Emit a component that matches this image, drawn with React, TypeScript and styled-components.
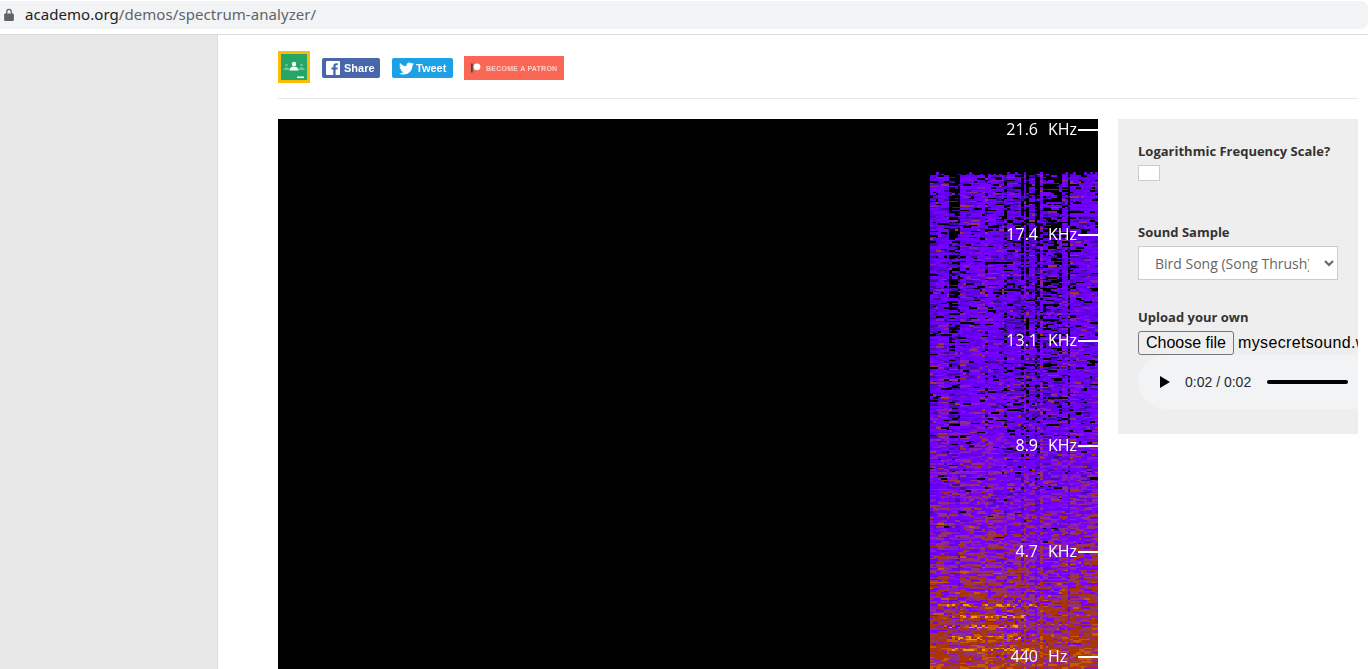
import { useEffect, useRef } from 'react';
import styled, { createGlobalStyle } from 'styled-components';
import { FaTwitter } from 'react-icons/fa';

const GlobalStyle = createGlobalStyle`
  html, body {
    margin: 0;
    height: 669px;
    overflow: hidden;
    background: #fff;
    font-family: 'Open Sans', 'Liberation Sans', sans-serif;
  }
`;

const Page = styled.div`
  display: flex;
  flex-direction: column;
  width: 1368px;
  height: 669px;
  overflow: hidden;
`;

const BrowserBar = styled.div`
  height: 35px;
  box-sizing: border-box;
  padding-top: 1px;
  border-bottom: 1px solid #dadce0;
  flex-shrink: 0;
`;

const UrlBox = styled.div`
  height: 28px;
  background: #f1f3f4;
  border-radius: 0 8px 8px 0;
  display: flex;
  align-items: center;
  padding: 0 0 2px 4px;
  box-sizing: border-box;
  gap: 11px;
  font-family: 'Noto Sans', sans-serif;
  font-size: 15px;
  letter-spacing: 0.06px;
  color: #5f6368;
`;

const UrlHost = styled.span`
  color: #202124;
`;

const Body = styled.div`
  flex: 1;
  display: flex;
  min-height: 0;
`;

const Sidebar = styled.aside`
  width: 217px;
  flex-shrink: 0;
  background: #e8e8e8;
  border-right: 1px solid #ddd;
`;

const Content = styled.main`
  flex: 1;
  padding: 0 10px 0 60px;
  min-width: 0;
`;

const SocialRow = styled.div`
  height: 64px;
  box-sizing: border-box;
  padding-top: 16px;
  border-bottom: 1px solid #e8e8e8;
  display: flex;
  align-items: flex-start;
`;

const ClassroomIcon = styled.svg`
  width: 32px;
  height: 32px;
  margin-right: 12px;
  flex-shrink: 0;
`;

const ShareButton = styled.div<{ $bg: string; $w: number }>`
  width: ${p => p.$w}px;
  height: 20px;
  margin: 7px 12px 0 0;
  background: ${p => p.$bg};
  border-radius: 2px;
  display: flex;
  align-items: center;
  color: #fff;
  font-family: 'Liberation Sans', sans-serif;
  font-weight: 700;
  font-size: 11px;
  filter: blur(0.3px);
`;

const FbGlyph = styled.svg`
  width: 14px;
  height: 14px;
  margin: 0 4px 0 4px;
`;

const TwitterGlyph = styled(FaTwitter)`
  width: 15px;
  height: 15px;
  margin: 0 2px 0 7px;
`;

const PatronButton = styled.div`
  width: 100px;
  height: 24px;
  margin: 5px 0 0 -1px;
  background: #f96854;
  display: flex;
  align-items: center;
  padding-left: 7px;
  box-sizing: border-box;
  gap: 5px;
  color: #fdd0c8;
  font-family: 'Liberation Sans', sans-serif;
  font-weight: 700;
  font-size: 7px;
  letter-spacing: 0.25px;
  white-space: nowrap;
`;

const PatronText = styled.span`
  filter: blur(0.4px);
`;

const PatronGlyph = styled.svg`
  width: 10px;
  height: 10px;
  flex-shrink: 0;
`;

const Columns = styled.div`
  display: flex;
  gap: 20px;
  padding-top: 20px;
`;

const SpectrumBox = styled.div`
  position: relative;
  width: 820px;
  height: 550px;
  background: #000;
  flex-shrink: 0;
  overflow: hidden;
`;

const SpectrumCanvas = styled.canvas`
  display: block;
`;

const Axis = styled.div`
  position: absolute;
  top: -1px;
  right: 0;
  display: flex;
  flex-direction: column;
  gap: 83.4px;
`;

const AxisRow = styled.div`
  height: 22px;
  display: flex;
  align-items: center;
  color: #fff;
  font-size: 16px;
`;

const AxisValue = styled.span`
  width: 50px;
  text-align: right;
  margin-right: 10px;
`;

const AxisUnit = styled.span`
  width: 30px;
`;

const AxisTick = styled.span`
  width: 20px;
  height: 2px;
  margin-top: 2px;
  background: #fff;
`;

const Panel = styled.section`
  width: 240px;
  height: 315px;
  box-sizing: border-box;
  padding: 23px 0 0 20px;
  background: #eee;
  overflow: hidden;
  flex-shrink: 0;
`;

const Label = styled.div<{ $mt?: number }>`
  margin-top: ${p => p.$mt ?? 0}px;
  font-size: 13px;
  line-height: 18px;
  font-weight: 700;
  color: #333;
  white-space: nowrap;
`;

const FakeCheck = styled.div`
  width: 22px;
  height: 16px;
  margin-top: 5px;
  box-sizing: border-box;
  background: #fff;
  border: 1px solid #ccc;
`;

const SampleSelect = styled.select`
  display: block;
  width: 200px;
  height: 34px;
  margin-top: 5px;
  padding: 0 12px;
  box-sizing: border-box;
  background: #fff;
  border: 1px solid #ccc;
  border-radius: 0;
  color: #666;
  font-family: 'Open Sans', sans-serif;
  font-size: 14px;
`;

const FileRow = styled.div`
  display: flex;
  align-items: center;
  height: 24px;
  margin-top: 5px;
  white-space: nowrap;
  font-family: 'Liberation Sans', sans-serif;
  font-size: 16px;
  color: #000;
`;

const FileButton = styled.button`
  width: 96px;
  height: 24px;
  padding: 0;
  margin-right: 4px;
  flex-shrink: 0;
  background: #efefef;
  border: 1px solid #767676;
  border-radius: 3px;
  font: inherit;
  color: #000;
`;

const FileName = styled.span`
  letter-spacing: 0.35px;
`;

const Player = styled.div`
  width: 300px;
  height: 54px;
  display: flex;
  align-items: center;
  background: #f1f3f4;
  border-radius: 27px;
  font-family: 'Liberation Sans', sans-serif;
  font-size: 14px;
  color: #1f2a33;
`;

const PlayGlyph = styled.svg`
  width: 10px;
  height: 12px;
  margin: 0 15px 0 22px;
  flex-shrink: 0;
`;

const Progress = styled.div`
  width: 81px;
  height: 4px;
  margin-left: 16px;
  background: #000;
  border-radius: 2px;
  flex-shrink: 0;
`;

const LABELS = [
  ['21.6', 'KHz'],
  ['17.4', 'KHz'],
  ['13.1', 'KHz'],
  ['8.9', 'KHz'],
  ['4.7', 'KHz'],
  ['440', 'Hz'],
];

// x ranges (px from spectrogram's left edge) where the top of the spectrum is quiet
const QUIET: [number, number, number][] = [
  [18, 29, 0.7],
  [53, 56, 0.3],
  [72, 75, 0.45],
  [90, 93, 0.95],
  [96, 99, 0.8],
  [102, 105, 0.85],
  [107, 110, 0.7],
  [112, 132, 0.5],
  [135, 138, 0.95],
];

// rows with strong orange partials: y from top of canvas, x range
const PARTIALS: [number, number, number][] = [
  [486, 8, 105],
  [496, 30, 95],
  [507, 10, 90],
  [518, 12, 90],
  [529, 8, 105],
];

const colorFor = (v: number) => {
  if (v < 0.13) return '#000000';
  if (v < 0.25) return '#3d0c9e';
  if (v < 0.36) return '#5f00e6';
  if (v < 0.5) return '#7400ff';
  if (v < 0.58) return '#8a18c0';
  if (v < 0.66) return '#92307c';
  if (v < 0.74) return '#a03a30';
  if (v < 0.88) return '#ac3400';
  if (v < 0.97) return '#c85a00';
  return '#eda000';
};

const drawSpectrum = (ctx: CanvasRenderingContext2D) => {
  let seed = 12345;
  const rand = () => {
    seed = (seed * 1664525 + 1013904223) >>> 0;
    return seed / 4294967296;
  };
  const left = 652;
  const top = 53;
  const cols = 61;
  const cw = 168 / cols;
  const rowH = 1.5;
  const rows = Math.ceil(497 / rowH);
  ctx.fillStyle = '#000';
  ctx.fillRect(0, 0, 820, 550);
  const colGain: number[] = [];
  for (let c = 0; c < cols; c++) colGain.push(rand() * 0.1 - 0.05);
  const edge = colGain.map(() => Math.floor(rand() * 3));

  for (let r = 0; r < rows; r++) {
    const y = top + r * rowH;
    const f = r / rows;
    const rowGain = (rand() - 0.5) * 0.06;
    let run = 0;
    let runVal = 0;
    let lastQuiet = 0;
    for (let c = 0; c < cols; c++) {
      const px = c * cw;
      if (r < edge[c]) continue;
      let quiet = 0;
      for (const [a, b, q] of QUIET) if (px >= a && px < b) quiet = q;
      if (quiet !== lastQuiet) run = 0;
      lastQuiet = quiet;
      const base = 0.36 + Math.pow(f, 3.5) * 0.42 + colGain[c] + rowGain - quiet * 0.14 * f;
      if (run <= 0) {
        run = 1 + Math.floor(rand() * 3);
        let v = base + (rand() - 0.5) * (0.22 + f * 0.2);
        if (rand() < 0.05 + f * 0.12) v += 0.2;
        // black dropouts thin out toward the low frequencies
        const dropChance = Math.max(0, 0.16 * (1 - f * 1.3)) + quiet * Math.max(0, 1 - f * 1.6);
        if (rand() < dropChance) v = 0.05 + rand() * 0.1;
        runVal = Math.min(v, 0.92);
      }
      run--;
      let v = runVal;
      for (const [py, a, b] of PARTIALS) {
        if (Math.abs(y - py) < 2 && px >= a && px < b && rand() < 0.55) v = 0.9 + rand() * 0.14;
      }
      ctx.fillStyle = colorFor(v);
      ctx.fillRect(left + Math.round(px), Math.round(y), Math.ceil(cw), 2);
    }
  }
};

const Spectrum = () => {
  const ref = useRef<HTMLCanvasElement>(null);
  useEffect(() => {
    const ctx = ref.current?.getContext('2d');
    if (ctx) drawSpectrum(ctx);
  }, []);
  return <SpectrumCanvas ref={ref} width={820} height={550} />;
};

export default function App() {
  return (
    <Page>
      <GlobalStyle />
      <BrowserBar>
        <UrlBox>
          <svg width="10" height="13" viewBox="0 0 9 12">
            <path d="M1.8 5V3.400a2.700 2.700 0 0 1 5.400 0V5H8a1 1 0 0 1 1 1v5a1 1 0 0 1-1 1H1a1 1 0 0 1-1-1V6a1 1 0 0 1 1-1zM3 5h3V3.400a1.500 1.500 0 0 0-3 0z" fill="#5f6368" />
          </svg>
          <span>
            <UrlHost>academo.org</UrlHost>/demos/spectrum-analyzer/
          </span>
        </UrlBox>
      </BrowserBar>
      <Body>
        <Sidebar />
        <Content>
          <SocialRow>
            <ClassroomIcon viewBox="0 0 32 32">
              <rect width="32" height="32" fill="#fbbc04" />
              <rect x="3" y="3" width="26" height="26" fill="#25a667" />
              <circle cx="8.5" cy="14" r="1.3" fill="#6cc595" />
              <circle cx="23.5" cy="14" r="1.3" fill="#6cc595" />
              <path d="M5 19c.5-1.800 2-2.700 3.500-2.700s3 .9 3.500 2.700zM20 19c.5-1.800 2-2.700 3.500-2.700s3 .9 3.500 2.700z" fill="#6cc595" />
              <circle cx="16" cy="13" r="2.200" fill="#fff" />
              <path d="M11.500 19.500c.5-2.900 2.300-3.900 4.500-3.900s4 1 4.500 3.900z" fill="#fff" />
              <rect x="19" y="25.500" width="7" height="1.600" fill="#fff" />
            </ClassroomIcon>
            <ShareButton $bg="#4867aa" $w={58}>
              <FbGlyph viewBox="0 0 14 14">
                <rect width="14" height="14" rx="1" fill="#fff" />
                <path d="M9.600 14V8.600h1.800l.3-2.100H9.600V5.200c0-.6.2-1 1-1h1.200V2.300c-.2 0-.9-.1-1.700-.1-1.700 0-2.800 1-2.800 2.900v1.400H5.400v2.100h1.900V14z" fill="#4867aa" />
              </FbGlyph>
              Share
            </ShareButton>
            <ShareButton $bg="#1da1e6" $w={61}>
              <TwitterGlyph />
              Tweet
            </ShareButton>
            <PatronButton>
              <PatronGlyph viewBox="0 0 10 10">
                <rect x="0" y="0.5" width="1.800" height="9" fill="#52434a" />
                <circle cx="6" cy="3.800" r="3.400" fill="#fff" />
              </PatronGlyph>
              <PatronText>BECOME A PATRON</PatronText>
            </PatronButton>
          </SocialRow>
          <Columns>
            <SpectrumBox>
              <Spectrum />
              <Axis>
                {LABELS.map(([value, unit]) => (
                  <AxisRow key={value}>
                    <AxisValue>{value}</AxisValue>
                    <AxisUnit>{unit}</AxisUnit>
                    <AxisTick />
                  </AxisRow>
                ))}
              </Axis>
            </SpectrumBox>
            <Panel>
              <Label>Logarithmic Frequency Scale?</Label>
              <FakeCheck />
              <Label $mt={42}>Sound Sample</Label>
              <SampleSelect defaultValue="bird">
                <option value="bird">Bird Song (Song Thrush)</option>
              </SampleSelect>
              <Label $mt={28}>Upload your own</Label>
              <FileRow>
                <FileButton type="button">Choose file</FileButton>
                <FileName>mysecretsound.wav</FileName>
              </FileRow>
              <Player>
                <PlayGlyph viewBox="0 0 10 12">
                  <path d="M0 0l10 6-10 6z" fill="#000" />
                </PlayGlyph>
                0:02 / 0:02
                <Progress />
              </Player>
            </Panel>
          </Columns>
        </Content>
      </Body>
    </Page>
  );
}
